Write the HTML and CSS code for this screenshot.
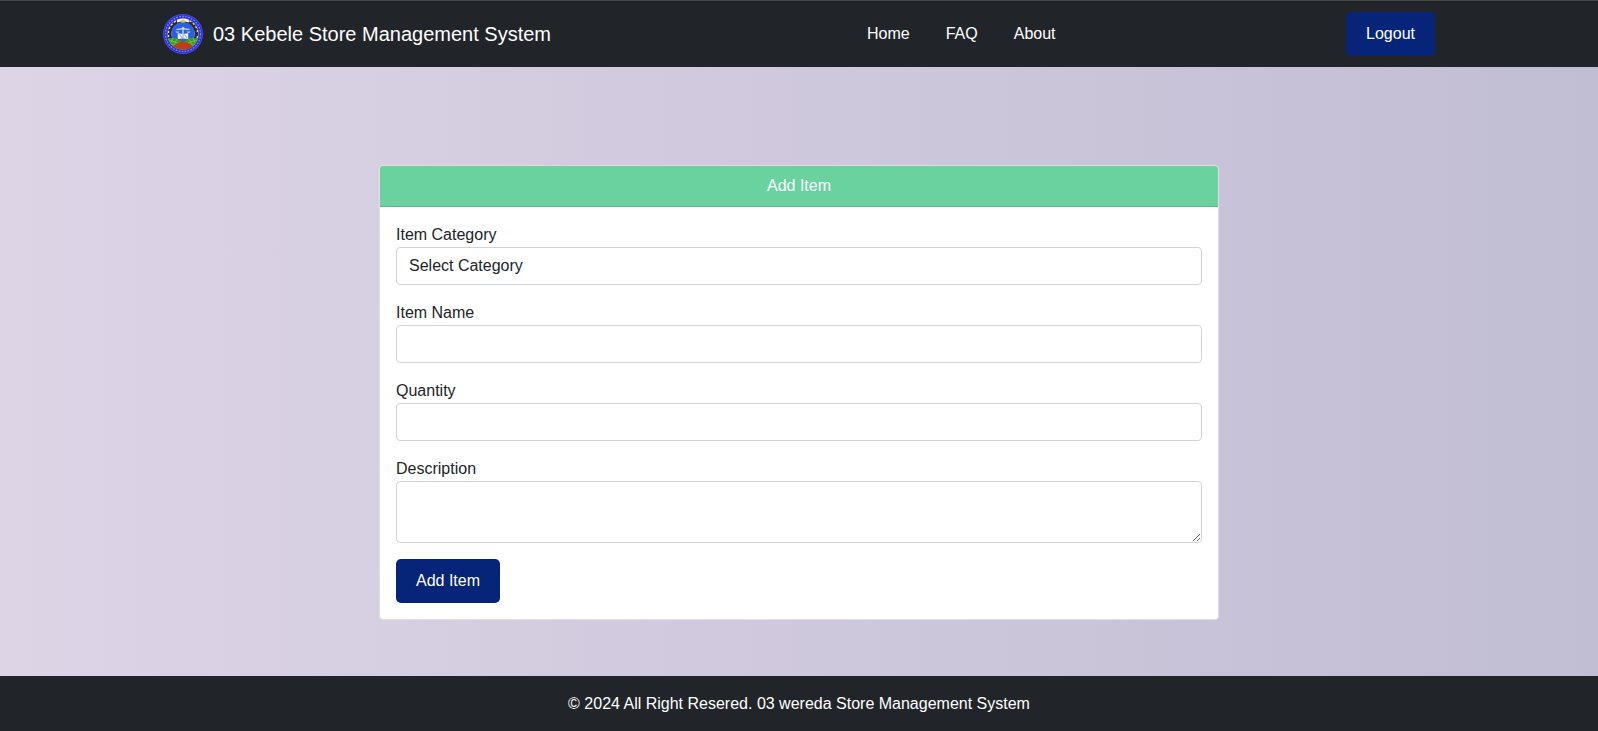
FILE: index.html
```html
<!DOCTYPE html>
<html lang="en">
<head>
<meta charset="utf-8">
<title>03 Kebele Store Management System</title>
<link rel="stylesheet" href="styles.css">
</head>
<body>
<nav class="navbar">
  <a class="brand">
    <svg class="logo" viewBox="0 0 40 40">
      <defs>
        <clipPath id="inner"><circle cx="20" cy="20" r="15.500"/></clipPath>
      </defs>
      <circle cx="20" cy="20" r="20" fill="#2a2ed2"/>
      <circle cx="20" cy="20" r="19.500" fill="none" stroke="#5358dc" stroke-width=".7"/>
      <circle cx="20" cy="20" r="17.500" fill="none" stroke="#8187e6" stroke-width="1.300" stroke-dasharray="1.800 1.200"/>
      <g clip-path="url(#inner)">
        <rect width="40" height="40" fill="#deded6"/>
        <circle cx="20" cy="20" r="12.800" fill="none" stroke="#2c2a20" stroke-width="2.400"/>
        <circle cx="20" cy="20" r="14.400" fill="none" stroke="#2c2a20" stroke-width="1.800" stroke-dasharray="2 2"/>
        <circle cx="20" cy="19.500" r="11.600" fill="#2c60e2"/>
        <path d="M14 5.500q6-2.500 12 0v3q-6-2-12 0z" fill="#f0f0e6"/>
        <path d="M4 24h9l7 4 7-4h9v12H4z" fill="#3c9a20"/>
        <path d="M6 26l9 3M5 29l8 3M10 24l-3 8M14 25l-4 8M34 26l-9 3M35 29l-8 3M30 24l3 8M26 25l4 8" stroke="#93cc50" stroke-width=".6"/>
        <path d="M20 27Q25 29 32 33v4H8v-4Q15 29 20 27z" fill="#c03c12"/>
      </g>
      <path d="M20 4.300l.8 1.600 1.700.2-1.300 1.200.4 1.800-1.600-.9-1.600.9.400-1.800-1.300-1.200 1.700-.2z" fill="#e4d820"/>
      <path d="M13.500 15.500l5-.6 1.500-1.400 1.500 1.400 5 .6M20 14v6" fill="none" stroke="#dfe3ea" stroke-width="1.200"/>
      <path d="M12.500 17.500h4l-1 1.300h-2zM23.500 17.500h4l-1 1.300h-2z" fill="#c4cbdc"/>
      <path d="M14.800 19.300l5.200.8 5.200-.8v5.700l-5.200-.6-5.200.6z" fill="#f0f0ee"/>
      <path d="M16.500 20.500l2.500 3.500M20 20v4.500M21.500 20.500l2.500 3.500" stroke="#8a8a88" stroke-width=".7"/>
    </svg>
    <span>03 Kebele Store Management System</span>
  </a>
  <div class="links"><a>Home</a><a>FAQ</a><a>About</a></div>
  <button class="btn">Logout</button>
</nav>
<main class="main">
  <section class="card">
    <header class="card-header">Add Item</header>
    <form class="card-body">
      <div class="field"><label for="category">Item Category</label>
        <select id="category" class="control"><option>Select Category</option></select></div>
      <div class="field"><label for="name">Item Name</label><input id="name" class="control"></div>
      <div class="field"><label for="quantity">Quantity</label><input id="quantity" class="control"></div>
      <div class="field"><label for="description">Description</label><textarea id="description" class="control area"></textarea></div>
      <button class="btn" type="button">Add Item</button>
    </form>
  </section>
</main>
<footer class="footer">© 2024 All Right Resered. 03 wereda Store Management System</footer>
</body>
</html>
```
FILE: styles.css
```css
* { box-sizing: border-box; }
body {
  margin: 0;
  height: 731px;
  overflow: hidden;
  display: flex;
  flex-direction: column;
  font: 16px/24px "Liberation Sans", Arial, sans-serif;
  color: #212529;
  background: linear-gradient(to right, #ddd4e6, #c1bdd3);
}
.navbar {
  flex: none;
  height: 67px;
  padding: 0 163px;
  border-top: 1px solid #424746;
  background: #212529;
  color: #fff;
  display: flex;
  align-items: center;
}
.brand { display: flex; align-items: center; gap: 10px; width: 704px; font-size: 20px; }
.logo { width: 40px; height: 40px; }
.links { flex: 1; display: flex; gap: 36px; }
.btn {
  font: inherit;
  color: #fff;
  background: #062578;
  border: 0;
  border-radius: 5px;
  padding: 10px 20px;
}
.navbar .btn { margin-bottom: 1px; }
.main { flex: 1; padding-top: 98px; }
.card {
  width: 840px;
  margin: 0 auto;
  border: 1px solid #dfdfdf;
  border-radius: 4px;
  background: #fff;
}
.card-header {
  padding: 8px 16px;
  text-align: center;
  color: #fff;
  background: #6ad29f;
  border-bottom: 1px solid #5cb88b;
  border-radius: 3px 3px 0 0;
}
.card-body { padding: 16px; }
.field { margin-bottom: 16px; }
.field label { display: block; }
.control {
  display: block;
  width: 100%;
  height: 38px;
  padding: 6px 12px;
  font: inherit;
  color: #212529;
  background: #fff;
  border: 1px solid #ced4da;
  border-radius: 4px;
  appearance: none;
}
.area { height: 62px; resize: vertical; }
.footer {
  flex: none;
  height: 55px;
  padding-top: 16px;
  text-align: center;
  color: #fff;
  background: #212529;
}
```
